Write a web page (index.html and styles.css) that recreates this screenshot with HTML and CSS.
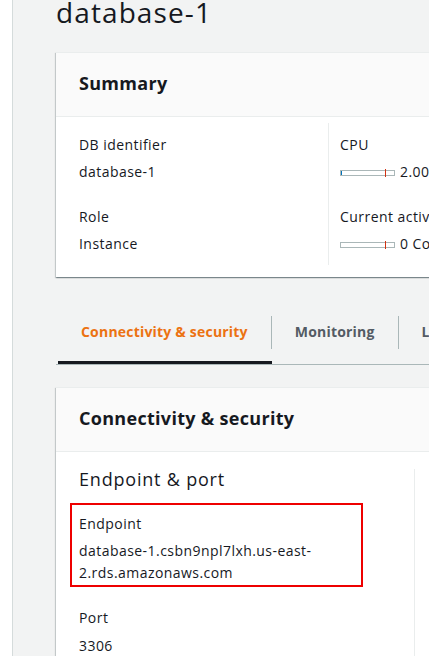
FILE: index.html
```html
<!DOCTYPE html>
<html lang="en">
<head>
<meta charset="utf-8">
<title>database-1</title>
<link rel="stylesheet" href="styles.css">
</head>
<body>
<div class="shell">
  <div class="rail"></div>
  <main class="content">
    <h1 class="page-title">database-1</h1>

    <section class="card">
      <div class="card-header"><h2>Summary</h2></div>
      <div class="card-body summary-cols">
        <div class="col col-left">
          <div class="kv">
            <div class="k">DB identifier</div>
            <div class="v">database-1</div>
          </div>
          <div class="kv">
            <div class="k">Role</div>
            <div class="v">Instance</div>
          </div>
        </div>
        <div class="col col-right">
          <div class="kv">
            <div class="k">CPU</div>
            <div class="v meter">
              <span class="bar"><span class="fill"></span><span class="tick"></span></span>
              <span>2.00%</span>
            </div>
          </div>
          <div class="kv">
            <div class="k">Current activity</div>
            <div class="v meter">
              <span class="bar"><span class="tick"></span></span>
              <span>0 Connections</span>
            </div>
          </div>
        </div>
      </div>
    </section>

    <ul class="tabs">
      <li class="tab active"><a class="tab-link">Connectivity &amp; security</a></li>
      <li class="tab"><a class="tab-link">Monitoring</a></li>
      <li class="tab"><a class="tab-link">Logs &amp; events</a></li>
    </ul>

    <section class="card">
      <div class="card-header"><h2>Connectivity &amp; security</h2></div>
      <div class="card-body conn-cols">
        <div class="col conn-left">
          <h3>Endpoint &amp; port</h3>
          <div class="highlight">
            <div class="k">Endpoint</div>
            <div class="v">database-1.csbn9npl7lxh.us-east-2.rds.amazonaws.com</div>
          </div>
          <div class="kv port">
            <div class="k">Port</div>
            <div class="v">3306</div>
          </div>
        </div>
        <div class="col conn-right"></div>
      </div>
    </section>
  </main>
</div>
</body>
</html>
```
FILE: styles.css
```css
html, body {
  margin: 0;
  padding: 0;
  overflow: hidden;
  height: 100%;
  background: #ffffff;
}

body {
  font-family: "Open Sans", "Noto Sans", sans-serif;
  color: #16191f;
  font-size: 14px;
  line-height: 22px;
  letter-spacing: 0.45px;
}

.shell {
  display: flex;
  height: 100%;
}

.rail {
  width: 12px;
  flex: 0 0 12px;
  background: #ffffff;
  border-right: 1px solid #d5dbdb;
}

.content {
  flex: 1;
  min-width: 0;
  overflow: hidden;
  background: #f2f3f3;
  padding-left: 43px;
}

.page-title {
  margin: -6px 0 0 0;
  font-size: 28px;
  line-height: 36px;
  font-weight: 400;
  letter-spacing: 1.1px;
  color: #16191f;
}

.card {
  width: 560px;
  margin-top: 22px;
  background: #ffffff;
  border-top: 1px solid #eaeded;
  box-shadow: 0 1px 1px 0 rgba(0, 28, 36, 0.3), 1px 1px 1px 0 rgba(0, 28, 36, 0.15), -1px 1px 1px 0 rgba(0, 28, 36, 0.15);
}

.card-header {
  background: #fafafa;
  padding: 18px 23px 21px;
  border-bottom: 1px solid #eaeded;
}

.card-header h2 {
  margin: 0;
  font-size: 18px;
  line-height: 24px;
  font-weight: 700;
  letter-spacing: 0.3px;
}

.summary-cols {
  display: flex;
  padding: 6px 0 12px;
}

.col-left {
  width: 273px;
  box-sizing: border-box;
  padding: 11px 0 10px 23px;
  border-right: 1px solid #eaeded;
}

.col-right {
  flex: 1;
  padding: 11px 0 10px 11px;
}

.kv + .kv {
  margin-top: 23px;
}

.k, .v {
  white-space: nowrap;
}

.v {
  margin-top: 5px;
}

.meter {
  display: flex;
  align-items: center;
  gap: 5px;
}

.bar {
  position: relative;
  display: block;
  width: 53px;
  height: 4px;
  margin-top: 2px;
  border: 1px solid #aab7b8;
  background: #ffffff;
}

.fill {
  position: absolute;
  left: 0;
  top: 0;
  width: 1px;
  height: 4px;
  background: #0073bb;
}

.tick {
  position: absolute;
  left: 44px;
  top: -2px;
  width: 1px;
  height: 8px;
  background: #d13212;
}

.tabs {
  list-style: none;
  margin: 39px 0 0 0;
  padding: 0 0 0 2px;
  width: 560px;
  display: flex;
  border-bottom: 1px solid #aab7b8;
}

.tab {
  padding-bottom: 12px;
  border-bottom: 3px solid transparent;
  flex: 0 0 auto;
}

.tab.active {
  border-bottom-color: #16191f;
}

.tab-link {
  display: block;
  padding: 6px 23px 7px;
  font-size: 14px;
  line-height: 20px;
  font-weight: 700;
  letter-spacing: 0.2px;
  color: #545b64;
  border-right: 1px solid #aab7b8;
  white-space: nowrap;
}

.tab.active .tab-link {
  color: #ec7211;
}

.tab:last-child .tab-link {
  border-right: none;
}

.conn-cols {
  display: flex;
  padding-top: 17px;
}

.conn-left {
  width: 359px;
  box-sizing: border-box;
  padding-left: 23px;
  border-right: 1px solid #eaeded;
  padding-bottom: 40px;
}

.conn-right {
  flex: 1;
}

.conn-left h3 {
  margin: 0;
  font-size: 18px;
  line-height: 20px;
  font-weight: 400;
  letter-spacing: 0.8px;
}

.highlight {
  width: 293px;
  box-sizing: border-box;
  margin: 14px 0 0 -9px;
  border: 2px solid #ee0000;
  padding: 8px 7px 1px;
}

.highlight .v {
  white-space: normal;
}

.port {
  margin-top: 20px;
}

.port .v {
  margin-top: 6px;
}
```
